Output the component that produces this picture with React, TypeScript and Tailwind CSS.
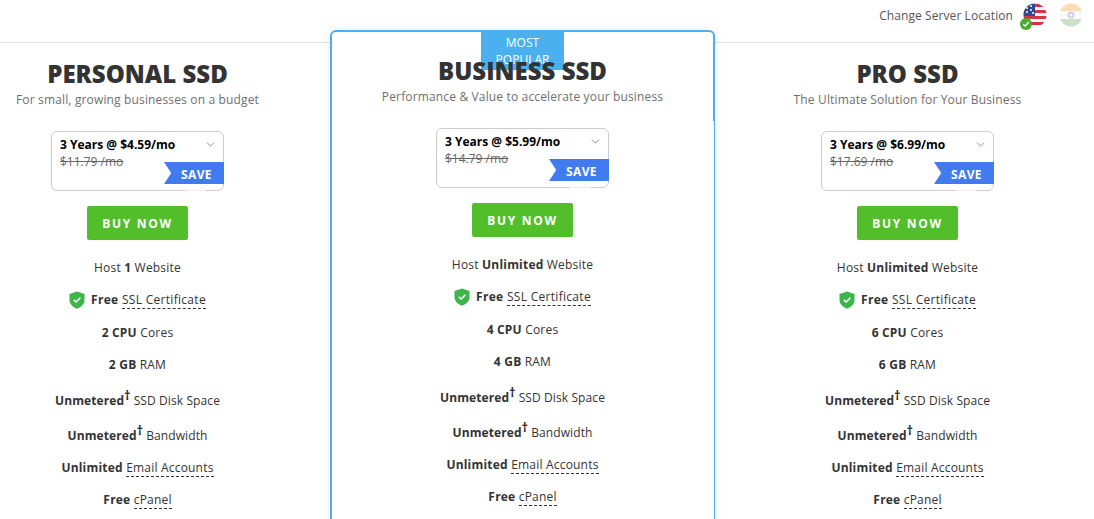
import React from 'react';
import { ChevronDown } from 'lucide-react';

type Plan = {
    name: string;
    tagline: string;
    term: string;
    oldPrice: string;
    sites: string;
    cores: string;
    ram: string;
};

const plans: Plan[] = [
    { name: 'PERSONAL SSD', tagline: 'For small, growing businesses on a budget', term: '3 Years @ $4.59/mo', oldPrice: '$11.79', sites: '1', cores: '2', ram: '2' },
    { name: 'BUSINESS SSD', tagline: 'Performance & Value to accelerate your business', term: '3 Years @ $5.99/mo', oldPrice: '$14.79', sites: 'Unlimited', cores: '4', ram: '4' },
    { name: 'PRO SSD', tagline: 'The Ultimate Solution for Your Business', term: '3 Years @ $6.99/mo', oldPrice: '$17.69', sites: 'Unlimited', cores: '6', ram: '6' },
];

const UsFlag = () => (
    <svg width="24" height="24" viewBox="0 0 24 24">
        <defs>
            <clipPath id="us-clip">
                <circle cx="12" cy="12" r="11.5" />
            </clipPath>
        </defs>
        <g clipPath="url(#us-clip)">
            <rect width="24" height="24" fill="#f4f4f4" />
            <rect y="1" width="24" height="3" fill="#d8343f" />
            <rect y="7" width="24" height="3" fill="#d8343f" />
            <rect y="13" width="24" height="3" fill="#d8343f" />
            <rect y="19" width="24" height="3" fill="#d8343f" />
            <rect width="12" height="13" fill="#2f4a90" />
            <circle cx="4" cy="5" r="1" fill="#fff" />
            <circle cx="8" cy="3" r="1" fill="#fff" />
            <circle cx="8" cy="7" r="1" fill="#fff" />
            <circle cx="4" cy="9" r="1" fill="#fff" />
            <circle cx="10" cy="10" r="1" fill="#fff" />
        </g>
    </svg>
);

const IndiaFlag = () => (
    <svg width="24" height="24" viewBox="0 0 24 24" className="opacity-40">
        <defs>
            <clipPath id="in-clip">
                <circle cx="12" cy="12" r="11.5" />
            </clipPath>
        </defs>
        <g clipPath="url(#in-clip)">
            <rect width="24" height="8" fill="#f6a94e" />
            <rect y="8" width="24" height="8" fill="#f4f4f4" />
            <rect y="16" width="24" height="8" fill="#7fb77a" />
            <circle cx="12" cy="12" r="3.5" fill="#7d8fc4" />
            <circle cx="12" cy="12" r="1.5" fill="#f4f4f4" />
        </g>
    </svg>
);

const Shield = () => (
    <svg width="16" height="18" viewBox="0 0 16 18" className="mr-[3px] shrink-0">
        <path d="M8 0.5 L15.5 3 V9 C15.5 13 12.5 16 8 17.7 C3.5 16 0.5 13 0.5 9 V3 Z" fill="#3cb54a" />
        <path d="M4.8 8.8 L7.2 11 L11.4 6.8" fill="none" stroke="#fff" strokeWidth="1.6" />
    </svg>
);

const Dotted = ({ children }: { children: React.ReactNode }) => (
    <span className="border-b border-dashed border-[#333] leading-[15px]">{children}</span>
);

const Dagger = () => <sup className="top-[-5px] text-[12px] font-bold leading-none text-[#222]">†</sup>;

const Row = ({ children, className = 'h-8' }: { children: React.ReactNode; className?: string }) => (
    <div className={`flex items-center justify-center ${className}`}>
        <span className="flex items-center gap-[3px] whitespace-pre">{children}</span>
    </div>
);

const PlanBody = ({ plan }: { plan: Plan }) => (
    <div className="flex flex-col items-center text-[12px] tracking-[0.2px] text-[#333]">
        <h2 className="relative text-[24px] leading-[32px] font-extrabold tracking-normal text-[#333]">{plan.name}</h2>
        <p className="relative mt-[1px] text-[12px] leading-[18px] tracking-[0.15px] text-[#6f6f6f]">{plan.tagline}</p>

        <div className="relative mt-[22px] h-[60px] w-[173px] rounded-[6px] border border-[#ccc] bg-white px-2 pt-[4px] text-left">
            <div className="flex items-center justify-between">
                <span className="text-[12px] leading-[17px] font-bold tracking-normal text-black">{plan.term}</span>
                <ChevronDown size={13} strokeWidth={1.5} className="mr-[-2px] text-[#5f7f95]" />
            </div>
            <div className="text-[12px] leading-[17px] tracking-normal text-[#666] line-through">{plan.oldPrice} /mo</div>
            <div className="absolute top-[30px] right-[-1px] flex h-[22px] w-[60px] items-center justify-end bg-[#407bef] pt-[4px] pr-[12px] text-[12px] font-bold tracking-[0.4px] text-white [clip-path:polygon(0_0,100%_0,100%_100%,0_100%,12%_50%)]">
                SAVE
            </div>
            <div className="absolute right-[17px] bottom-[-1px] h-[2px] w-[21px] bg-white/70" />
        </div>

        <button className="mt-[15px] h-[34px] w-[101px] rounded-[2px] bg-[#52bf2a] pt-[2px] text-[12px] font-bold tracking-[1.7px] text-white">
            BUY NOW
        </button>

        <div className="mt-[12px] w-full">
            <Row><span>Host <b>{plan.sites}</b> Website</span></Row>
            <Row className="h-8 tracking-[0.3px]"><Shield /><span><b>Free</b> <Dotted>SSL Certificate</Dotted></span></Row>
            <Row className="h-[33px]"><span><b>{plan.cores} CPU</b> Cores</span></Row>
            <Row><span><b>{plan.ram} GB</b> RAM</span></Row>
            <Row className="h-[35px] pt-[5px] tracking-[0.1px]"><span><b>Unmetered</b><Dagger /> SSD Disk Space</span></Row>
            <Row className="h-[35px] pt-[5px] tracking-[0.1px]"><span><b>Unmetered</b><Dagger /> Bandwidth</span></Row>
            <Row className="mt-px h-8"><span><b>Unlimited</b> <Dotted>Email Accounts</Dotted></span></Row>
            <Row><span><b>Free</b> <Dotted>cPanel</Dotted></span></Row>
        </div>
    </div>
);

export default function App() {
    return (
        <div className="h-[519px] w-[1094px] overflow-hidden bg-white font-['Open_Sans',sans-serif]">
            <header className="flex h-[43px] items-start justify-end border-b border-[#e6e6e6] pt-[3px] pr-[11px]">
                <span className="mt-[4px] text-[12px] leading-[17px] tracking-[0.08px] text-[#555]">Change Server Location</span>
                <div className="relative ml-[10px]">
                    <UsFlag />
                    <span className="absolute top-[15px] left-[-3px] flex h-[12px] w-[12px] items-center justify-center rounded-full bg-[#46ad2d]">
                        <svg width="8" height="8" viewBox="0 0 8 8">
                            <path d="M1.2 4.2 L3.2 6 L6.8 2" fill="none" stroke="#fff" strokeWidth="1.4" />
                        </svg>
                    </span>
                </div>
                <div className="ml-[12px]">
                    <IndiaFlag />
                </div>
            </header>

            <div className="flex items-start">
                <section className="w-[330px] shrink-0 pt-[15px] pr-[55px] text-center">
                    <PlanBody plan={plans[0]} />
                </section>

                <section className="relative mt-[-13px] h-[520px] w-[385px] shrink-0 rounded-t-[6px] border-2 border-b-0 border-[#4ab0ee] bg-white pt-[23px] text-center shadow-[0_0_8px_rgba(0,0,0,0.08)]">
                    <div className="absolute top-0 left-[149px] h-[38px] w-[83px] overflow-hidden bg-[#4ab0ee] text-[12px] leading-[17px] text-white">
                        <div className="pt-[2px]">MOST</div>
                        <div>POPULAR</div>
                    </div>
                    <div className="absolute top-[89px] right-[-1px] bottom-0 w-px bg-white" />
                    <PlanBody plan={plans[1]} />
                </section>

                <section className="w-[385px] shrink-0 pt-[15px] text-center">
                    <PlanBody plan={plans[2]} />
                </section>
            </div>
        </div>
    );
}
